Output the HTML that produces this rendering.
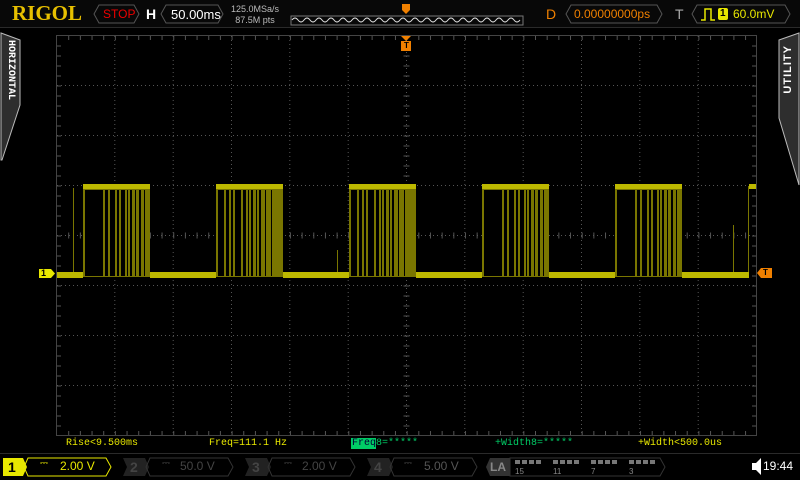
<!DOCTYPE html>
<html><head><style>
body{margin:0;width:800px;height:480px;background:#000;overflow:hidden;font-family:"Liberation Sans",sans-serif;position:relative}
.a{position:absolute;white-space:nowrap}
.m{font-family:"Liberation Mono",monospace;font-size:10px;color:#e8e800;letter-spacing:0}
</style></head><body>
<svg class="a" style="left:0;top:0" width="800" height="480">
<defs>
<g id="gp">
<rect x="0" y="2" width="67" height="91" fill="#7a7600"/>
<g fill="#000">
<rect x="2" y="6" width="18" height="86"/><rect x="22" y="6" width="3" height="86"/><rect x="27" y="6" width="5" height="86"/><rect x="34" y="6" width="2" height="86"/><rect x="38" y="6" width="4" height="86"/><rect x="44" y="6" width="1" height="86"/><rect x="47" y="6" width="2" height="86"/><rect x="52" y="6" width="1" height="86"/><rect x="56" y="6" width="2" height="86"/><rect x="61" y="6" width="1" height="86"/>
</g>
<rect x="0" y="0" width="67" height="5" fill="#bdb800"/>
</g>
<g id="gp2">
<rect x="0" y="2" width="67" height="91" fill="#7a7600"/>
<g fill="#000">
<rect x="2" y="6" width="6" height="86"/><rect x="10" y="6" width="3" height="86"/><rect x="15" y="6" width="2" height="86"/><rect x="19" y="6" width="6" height="86"/><rect x="27" y="6" width="3" height="86"/><rect x="32" y="6" width="1" height="86"/><rect x="35" y="6" width="2" height="86"/><rect x="40" y="6" width="1" height="86"/><rect x="43" y="6" width="2" height="86"/><rect x="49" y="6" width="1" height="86"/><rect x="55" y="6" width="1" height="86"/>
</g>
<rect x="0" y="0" width="67" height="5" fill="#bdb800"/>
</g>
</defs>
<rect x="0" y="0" width="800" height="27" fill="#080808"/>
<line x1="0" y1="27.5" x2="800" y2="27.5" stroke="#2a2a2a"/>
<polygon points="99,5 134,5 139,14 134,23 99,23 94,14" fill="none" stroke="#555"/>
<polygon points="166,5 218,5 223,14 218,23 166,23 161,14" fill="none" stroke="#555"/>
<rect x="291" y="16" width="232" height="9" fill="none" stroke="#777"/>
<path d="M292 20 q3 -4 6 0 t6 0 t6 0 t6 0 t6 0 t6 0 t6 0 t6 0 t6 0 t6 0 t6 0 t6 0 t6 0 t6 0 t6 0 t6 0 t6 0 t6 0 t6 0 t6 0 t6 0 t6 0 t6 0 t6 0 t6 0 t6 0 t6 0 t6 0 t6 0 t6 0 t6 0 t6 0 t6 0 t6 0 t6 0 t6 0 t6 0 t6 0" fill="none" stroke="#ddd"/>
<polygon points="402,4 410,4 410,10 406,14 402,10" fill="#f08000"/>
<polygon points="571,5 657,5 662,14 657,23 571,23 566,14" fill="none" stroke="#555"/>
<polygon points="697,5 785,5 790,14 785,23 697,23 692,14" fill="none" stroke="#555"/>
<path d="M701 20 h4 v-11 h6 v11 h4" fill="none" stroke="#e8e800" stroke-width="1.5"/>
<rect x="718" y="8" width="10" height="12" rx="2" fill="#e8e800"/>
<polygon points="1,33 20,40 20,105 2,160 1,160" fill="#2e2e2e" stroke="#bbb"/>
<polygon points="799,33 779,40 779,118 799,185" fill="#2e2e2e" stroke="#bbb"/>
<rect x="56.5" y="35.5" width="700" height="400" fill="none" stroke="#444"/>
<g stroke="#555" stroke-dasharray="1,3">
<line x1="114.8" y1="36" x2="114.8" y2="435"/><line x1="173.2" y1="36" x2="173.2" y2="435"/><line x1="231.5" y1="36" x2="231.5" y2="435"/><line x1="289.8" y1="36" x2="289.8" y2="435"/><line x1="348.2" y1="36" x2="348.2" y2="435"/><line x1="406.5" y1="36" x2="406.5" y2="435"/><line x1="464.8" y1="36" x2="464.8" y2="435"/><line x1="523.2" y1="36" x2="523.2" y2="435"/><line x1="581.5" y1="36" x2="581.5" y2="435"/><line x1="639.8" y1="36" x2="639.8" y2="435"/><line x1="698.2" y1="36" x2="698.2" y2="435"/>
<line x1="57" y1="85.5" x2="756" y2="85.5"/><line x1="57" y1="135.5" x2="756" y2="135.5"/><line x1="57" y1="185.5" x2="756" y2="185.5"/><line x1="57" y1="235.5" x2="756" y2="235.5"/><line x1="57" y1="285.5" x2="756" y2="285.5"/><line x1="57" y1="335.5" x2="756" y2="335.5"/><line x1="57" y1="385.5" x2="756" y2="385.5"/>
</g>
<g stroke="#555">
<line x1="68.2" y1="38" x2="756" y2="38" stroke-width="4" stroke-dasharray="1,10.67"/>
<line x1="68.2" y1="433" x2="756" y2="433" stroke-width="4" stroke-dasharray="1,10.67"/>
<line x1="68.2" y1="235.5" x2="756" y2="235.5" stroke-width="6" stroke-dasharray="1,10.67"/>
<line x1="59" y1="45.5" x2="59" y2="435" stroke-width="4" stroke-dasharray="1,9"/>
<line x1="754" y1="45.5" x2="754" y2="435" stroke-width="4" stroke-dasharray="1,9"/>
<line x1="406.5" y1="45.5" x2="406.5" y2="435" stroke-width="6" stroke-dasharray="1,9"/>
</g>
<use href="#gp" x="83" y="184"/><use href="#gp2" x="216" y="184"/><use href="#gp2" x="349" y="184" transform="translate(0,0)"/><use href="#gp" x="482" y="184"/><use href="#gp" x="615" y="184"/>
<rect x="749" y="184" width="7" height="5" fill="#bdb800"/>
<g fill="#bdb800">
<rect x="57" y="272" width="26" height="6"/><rect x="150" y="272" width="66" height="6"/><rect x="283" y="272" width="66" height="6"/><rect x="416" y="272" width="66" height="6"/><rect x="549" y="272" width="66" height="6"/><rect x="682" y="272" width="67" height="6"/>
</g>
<g stroke="#7a7600"><line x1="73.5" y1="188" x2="73.5" y2="272"/><line x1="337.5" y1="250" x2="337.5" y2="272"/><line x1="733.5" y1="225" x2="733.5" y2="272"/><line x1="748.5" y1="186" x2="748.5" y2="272"/></g>
<polygon points="39,269 51,269 55,273.5 51,278 39,278" fill="#e8e800"/>
<polygon points="757,273 761,268 772,268 772,278 761,278" fill="#f08000"/>
<polygon points="401,36 411,36 406,41" fill="#f08000"/>
<rect x="401" y="41" width="10" height="10" fill="#f08000"/>
<line x1="0" y1="453.5" x2="800" y2="453.5" stroke="#2a2a2a"/>
<rect x="351" y="438" width="25" height="11" fill="#00cc66"/>
<polygon points="3,458 23,458 27,467 23,476 3,476" fill="#e8e800"/>
<polygon points="28,458 106,458 111,467 106,476 28,476 24,467" fill="none" stroke="#e8e800"/>
<polygon points="123,458 145,458 149,467 145,476 123,476 127,467" fill="#222"/>
<polygon points="150,458 228,458 233,467 228,476 150,476 146,467" fill="none" stroke="#333"/>
<polygon points="245,458 267,458 271,467 267,476 245,476 249,467" fill="#222"/>
<polygon points="272,458 350,458 355,467 350,476 272,476 268,467" fill="none" stroke="#333"/>
<polygon points="367,458 389,458 393,467 389,476 367,476 371,467" fill="#222"/>
<polygon points="394,458 472,458 477,467 472,476 394,476 390,467" fill="none" stroke="#333"/>
<polygon points="490,458 510,458 510,476 490,476 486,467" fill="#333"/>
<polygon points="510,458 660,458 665,467 660,476 510,476" fill="none" stroke="#333"/>
<g fill="#777">
<rect x="515" y="460" width="5" height="4"/><rect x="522" y="460" width="5" height="4"/><rect x="529" y="460" width="5" height="4"/><rect x="536" y="460" width="5" height="4"/>
<rect x="553" y="460" width="5" height="4"/><rect x="560" y="460" width="5" height="4"/><rect x="567" y="460" width="5" height="4"/><rect x="574" y="460" width="5" height="4"/>
<rect x="591" y="460" width="5" height="4"/><rect x="598" y="460" width="5" height="4"/><rect x="605" y="460" width="5" height="4"/><rect x="612" y="460" width="5" height="4"/>
<rect x="629" y="460" width="5" height="4"/><rect x="636" y="460" width="5" height="4"/><rect x="643" y="460" width="5" height="4"/><rect x="650" y="460" width="5" height="4"/>
</g>
<polygon points="752,463 756,463 761,458 761,475 756,470 752,470" fill="#fff"/>
</svg>
<div class="a" style="left:12px;top:1px;font-family:'Liberation Serif',serif;font-weight:bold;font-size:21px;color:#e8c000">RIGOL</div>
<div class="a" style="left:103px;top:7px;font-size:12px;color:#e00">STOP</div>
<div class="a" style="left:146px;top:6px;font-size:14px;font-weight:bold;color:#fff">H</div>
<div class="a" style="left:171px;top:7px;font-size:13px;color:#fff">50.00ms</div>
<div class="a" style="left:231px;top:4px;font-size:9px;color:#bbb;line-height:11px;text-align:center">125.0MSa/s<br>87.5M pts</div>
<div class="a" style="left:546px;top:6px;font-size:14px;color:#f08000">D</div>
<div class="a" style="left:574px;top:7px;font-size:12px;color:#f08000">0.00000000ps</div>
<div class="a" style="left:675px;top:6px;font-size:14px;color:#aaa">T</div>
<div class="a" style="left:720px;top:8px;font-size:10px;font-weight:bold;color:#000">1</div>
<div class="a" style="left:733px;top:7px;font-size:12px;color:#e8e800">60.0mV</div>
<div class="a" style="left:404px;top:41px;font-size:8px;font-weight:bold;color:#000">T</div>
<div class="a" style="left:763px;top:268px;font-size:8px;font-weight:bold;color:#000">T</div>
<div class="a" style="left:41px;top:268px;font-size:9px;font-weight:bold;color:#000">1</div>
<div class="a" style="left:3px;top:40px;width:14px;font-family:'Liberation Mono',monospace;font-weight:bold;font-size:10px;color:#fff;writing-mode:vertical-rl;line-height:14px">HORIZONTAL</div>
<div class="a" style="left:782px;top:45px;font-weight:bold;font-size:11px;color:#fff;writing-mode:vertical-rl;transform:rotate(180deg);letter-spacing:1px">UTILITY</div>
<div class="a m" style="left:66px;top:438px">Rise&lt;9.500ms</div>
<div class="a m" style="left:209px;top:438px">Freq=111.1 Hz</div>
<div class="a m" style="left:352px;top:438px;color:#00cc66"><span style="color:#003">Freq</span>8=*****</div>
<div class="a m" style="left:495px;top:438px;color:#00cc66">+Width8=*****</div>
<div class="a m" style="left:638px;top:438px">+Width&lt;500.0us</div>
<div class="a" style="left:8px;top:459px;font-size:14px;font-weight:bold;color:#000">1</div>
<div class="a" style="left:40px;top:458px;font-size:10px;color:#e8e800">⎓</div>
<div class="a" style="left:60px;top:459px;font-size:12px;color:#e8e800">2.00 V</div>
<div class="a" style="left:130px;top:459px;font-size:14px;font-weight:bold;color:#444">2</div>
<div class="a" style="left:162px;top:458px;font-size:10px;color:#444">⎓</div>
<div class="a" style="left:180px;top:459px;font-size:12px;color:#444">50.0 V</div>
<div class="a" style="left:252px;top:459px;font-size:14px;font-weight:bold;color:#444">3</div>
<div class="a" style="left:284px;top:458px;font-size:10px;color:#444">⎓</div>
<div class="a" style="left:302px;top:459px;font-size:12px;color:#444">2.00 V</div>
<div class="a" style="left:374px;top:459px;font-size:14px;font-weight:bold;color:#444">4</div>
<div class="a" style="left:404px;top:458px;font-size:10px;color:#444">⎓</div>
<div class="a" style="left:424px;top:459px;font-size:12px;color:#555">5.00 V</div>
<div class="a" style="left:490px;top:460px;font-size:12px;font-weight:bold;color:#888">LA</div>
<div class="a" style="left:515px;top:467px;font-size:8px;color:#888">15</div>
<div class="a" style="left:553px;top:467px;font-size:8px;color:#888">11</div>
<div class="a" style="left:591px;top:467px;font-size:8px;color:#888">7</div>
<div class="a" style="left:629px;top:467px;font-size:8px;color:#888">3</div>
<div class="a" style="left:763px;top:459px;font-size:12px;color:#fff">19:44</div>
</body></html>
